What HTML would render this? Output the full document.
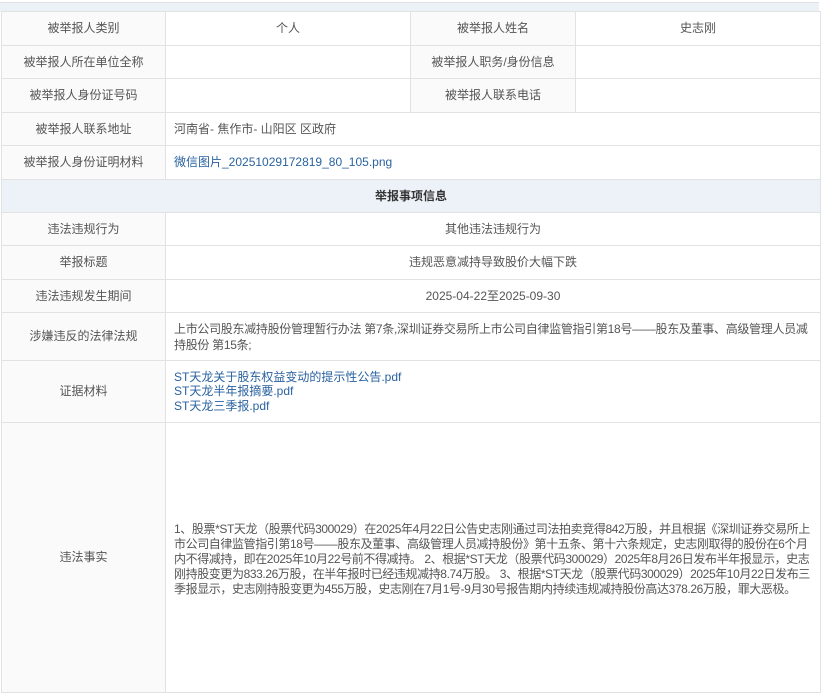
<!DOCTYPE html>
<html><head><meta charset="utf-8"><style>
body{margin:0;width:834px;height:596px;overflow:hidden;background:#fff;font-family:"Liberation Sans","Noto Sans CJK SC",sans-serif;font-size:12px;color:#555}
.top{position:absolute;left:0;top:2px;width:819px;height:9px;background:#ecf1f8;border-top:1px solid #e0e0e0}
table{position:absolute;left:1px;top:11px;border-collapse:collapse;width:819px;table-layout:fixed}
td{border:1px solid #e2e2e2;padding:0 8px;text-align:center;vertical-align:middle;line-height:15px}
td.l{background:#fafafa}
td.v{text-align:left}
td.n{letter-spacing:-0.3px;padding-right:8px}
td.m{letter-spacing:-0.4px;padding-right:8px}
a{color:#2a62a0;text-decoration:none}
.h td{background:#edf1f8;font-weight:bold;color:#333}
</style></head><body>
<div class="top"></div>
<table>
<colgroup><col style="width:164px"><col style="width:245px"><col style="width:165px"><col style="width:245px"></colgroup>
<tr style="height:34px"><td class="l">被举报人类别</td><td>个人</td><td class="l">被举报人姓名</td><td>史志刚</td></tr>
<tr style="height:33px"><td class="l">被举报人所在单位全称</td><td></td><td class="l">被举报人职务/身份信息</td><td></td></tr>
<tr style="height:34px"><td class="l">被举报人身份证号码</td><td></td><td class="l">被举报人联系电话</td><td></td></tr>
<tr style="height:33px"><td class="l">被举报人联系地址</td><td class="v" colspan="3">河南省- 焦作市- 山阳区 区政府</td></tr>
<tr style="height:34px"><td class="l">被举报人身份证明材料</td><td class="v" colspan="3"><a>微信图片_20251029172819_80_105.png</a></td></tr>
<tr class="h" style="height:33px"><td colspan="4">举报事项信息</td></tr>
<tr style="height:33px"><td class="l">违法违规行为</td><td colspan="3">其他违法违规行为</td></tr>
<tr style="height:34px"><td class="l">举报标题</td><td colspan="3">违规恶意减持导致股价大幅下跌</td></tr>
<tr style="height:33px"><td class="l">违法违规发生期间</td><td colspan="3">2025-04-22至2025-09-30</td></tr>
<tr style="height:48px"><td class="l">涉嫌违反的法律法规</td><td class="v n" colspan="3" style="line-height:16px">上市公司股东减持股份管理暂行办法 第7条,深圳证券交易所上市公司自律监管指引第18号——股东及董事、高级管理人员减持股份 第15条;</td></tr>
<tr style="height:62px"><td class="l">证据材料</td><td class="v" colspan="3" style="line-height:14.5px"><a>ST天龙关于股东权益变动的提示性公告.pdf</a><br><a>ST天龙半年报摘要.pdf</a><br><a>ST天龙三季报.pdf</a></td></tr>
<tr style="height:270px"><td class="l" style="vertical-align:top;padding-top:127px">违法事实</td><td class="v m" colspan="3" style="vertical-align:top;padding-top:99px">1、股票*ST天龙（股票代码300029）在2025年4月22日公告史志刚通过司法拍卖竞得842万股，并且根据《深圳证券交易所上市公司自律监管指引第18号——股东及董事、高级管理人员减持股份》第十五条、第十六条规定，史志刚取得的股份在6个月内不得减持，即在2025年10月22号前不得减持。 2、根据*ST天龙（股票代码300029）2025年8月26日发布半年报显示，史志刚持股变更为833.26万股，在半年报时已经违规减持8.74万股。 3、根据*ST天龙（股票代码300029）2025年10月22日发布三季报显示，史志刚持股变更为455万股，史志刚在7月1号-9月30号报告期内持续违规减持股份高达378.26万股，罪大恶极。</td></tr>
</table>
</body></html>
